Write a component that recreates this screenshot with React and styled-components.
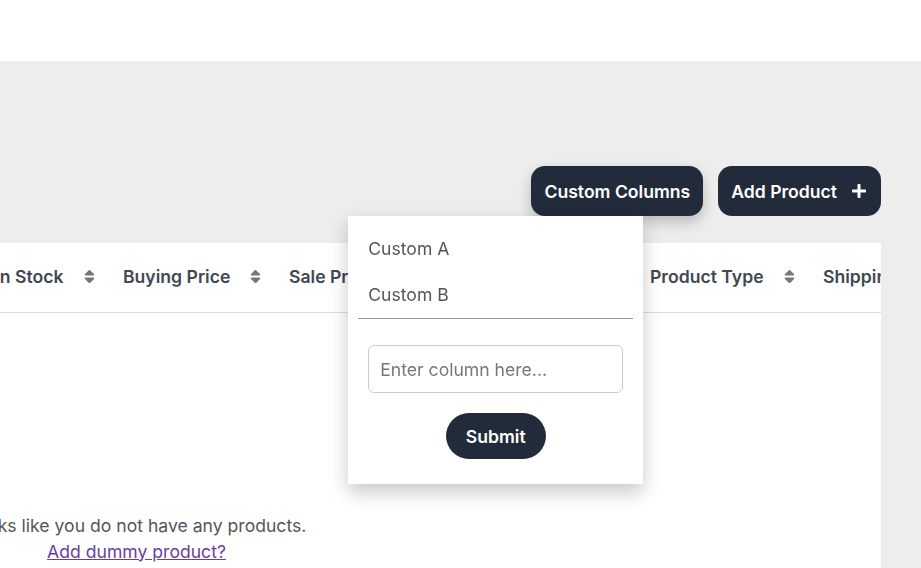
import React, { useLayoutEffect, useRef } from 'react';
import styled, { createGlobalStyle } from 'styled-components';
import { FaSort, FaPlus } from 'react-icons/fa';

const GlobalStyle = createGlobalStyle`
  html, body {
    margin: 0;
    padding: 0;
    overflow: hidden;
  }
  body {
    font-family: Inter, "Noto Sans", sans-serif;
    font-size: 17.6px;
    background: #ededed;
  }
  * {
    box-sizing: border-box;
  }
`;

const Page = styled.div`
  height: 100vh;
  display: flex;
  flex-direction: column;
  overflow: hidden;
`;

const TopBar = styled.header`
  height: 61px;
  flex-shrink: 0;
  background: #fff;
`;

const Main = styled.main`
  flex: 1;
  min-height: 0;
  display: flex;
  flex-direction: column;
  background: #ededed;
  padding: 105px 40px 0 0;
`;

const Toolbar = styled.div`
  display: flex;
  justify-content: flex-end;
  gap: 15px;
  margin-bottom: 27px;
`;

const MenuAnchor = styled.div`
  position: relative;
`;

const DarkButton = styled.button`
  height: 50px;
  padding: 0 ${(p) => (p.withIcon ? '14px' : '13px')} 0 13px;
  border: none;
  border-radius: 14px;
  background: #212b3a;
  color: #fff;
  font-family: Inter, sans-serif;
  font-size: 17.6px;
  font-weight: 600;
  display: flex;
  align-items: center;
  gap: 14px;
  cursor: pointer;
  box-shadow: ${(p) => (p.raised ? '0 6px 14px rgba(0, 0, 0, 0.22)' : 'none')};
`;

const Dropdown = styled.div`
  position: absolute;
  top: 100%;
  right: 60px;
  width: 295px;
  padding: 9px 10px 25px;
  background: #fff;
  box-shadow: 0 8px 18px rgba(0, 0, 0, 0.22);
  z-index: 10;
`;

const Option = styled.div`
  height: 46px;
  display: flex;
  align-items: center;
  padding-left: 10px;
  font-size: 17.6px;
  color: #555;
`;

const Divider = styled.hr`
  border: none;
  border-top: 1px solid #999;
  margin: 1px 0 26px;
`;

const ColumnForm = styled.form`
  display: flex;
  flex-direction: column;
  align-items: center;
  gap: 20px;
`;

const ColumnInput = styled.input`
  width: 255px;
  height: 48px;
  padding: 0 11px;
  border: 1px solid #ccc;
  border-radius: 6px;
  font-family: Inter, sans-serif;
  font-size: 17.6px;
  color: #333;
  outline: none;

  &::placeholder {
    color: #777;
  }
`;

const SubmitButton = styled.button`
  width: 100px;
  height: 46px;
  border: none;
  border-radius: 23px;
  background: #212b3a;
  color: #fff;
  font-family: Inter, sans-serif;
  font-size: 17.6px;
  font-weight: 600;
  cursor: pointer;
`;

const Card = styled.div`
  flex: 1;
  background: #fff;
  overflow-x: auto;
  overflow-y: hidden;
  scrollbar-width: none;

  &::-webkit-scrollbar {
    display: none;
  }
`;

const Table = styled.table`
  border-collapse: collapse;
  table-layout: fixed;
  width: ${(p) => p.width}px;
`;

const Th = styled.th`
  width: ${(p) => p.width}px;
  height: 69px;
  padding: 0 14px 2px;
  border-bottom: 1px solid #ddd;
  text-align: left;
  font-size: 17.6px;
  font-weight: 600;
  color: #414753;
`;

const HeadLabel = styled.div`
  display: flex;
  align-items: center;
  gap: 17px;
  white-space: nowrap;

  svg {
    color: #777;
    flex-shrink: 0;
  }
`;

const EmptyState = styled.div`
  padding-top: 200px;
  text-align: center;
  font-size: 17.6px;
  line-height: 26px;
  color: #555;
`;

const DummyLink = styled.a`
  color: #6b3ca4;
  text-decoration: underline;
`;

const columns = [
  { label: 'Product', width: 165 },
  { label: 'Category', width: 120 },
  { label: 'In Stock', width: 128 },
  { label: 'Buying Price', width: 166 },
  { label: 'Sale Price', width: 166 },
  { label: 'Stock Alert', width: 195 },
  { label: 'Product Type', width: 173 },
  { label: 'Shipping', width: 170 },
  { label: 'Actions', width: 140 },
];

const customColumns = ['Custom A', 'Custom B'];

const App = () => {
  const cardRef = useRef(null);
  const tableWidth = columns.reduce((sum, c) => sum + c.width, 0);

  // table is wide, start scrolled over to the stock / price columns
  useLayoutEffect(() => {
    if (cardRef.current) cardRef.current.scrollLeft = 304;
  }, []);

  return (
    <Page>
      <GlobalStyle />
      <TopBar />
      <Main>
        <Toolbar>
          <MenuAnchor>
            <DarkButton raised>Custom Columns</DarkButton>
            <Dropdown>
              {customColumns.map((name) => (
                <Option key={name}>{name}</Option>
              ))}
              <Divider />
              <ColumnForm onSubmit={(e) => e.preventDefault()}>
                <ColumnInput placeholder="Enter column here..." />
                <SubmitButton type="submit">Submit</SubmitButton>
              </ColumnForm>
            </Dropdown>
          </MenuAnchor>
          <DarkButton withIcon>
            Add Product
            <FaPlus size={16} />
          </DarkButton>
        </Toolbar>
        <Card ref={cardRef}>
          <Table width={tableWidth}>
            <thead>
              <tr>
                {columns.map((c) => (
                  <Th key={c.label} width={c.width}>
                    <HeadLabel>
                      {c.label}
                      <FaSort size={17} />
                    </HeadLabel>
                  </Th>
                ))}
              </tr>
            </thead>
          </Table>
          <EmptyState>
            Looks like you do not have any products.
            <br />
            <DummyLink href="#">Add dummy product?</DummyLink>
          </EmptyState>
        </Card>
      </Main>
    </Page>
  );
};

export default App;
